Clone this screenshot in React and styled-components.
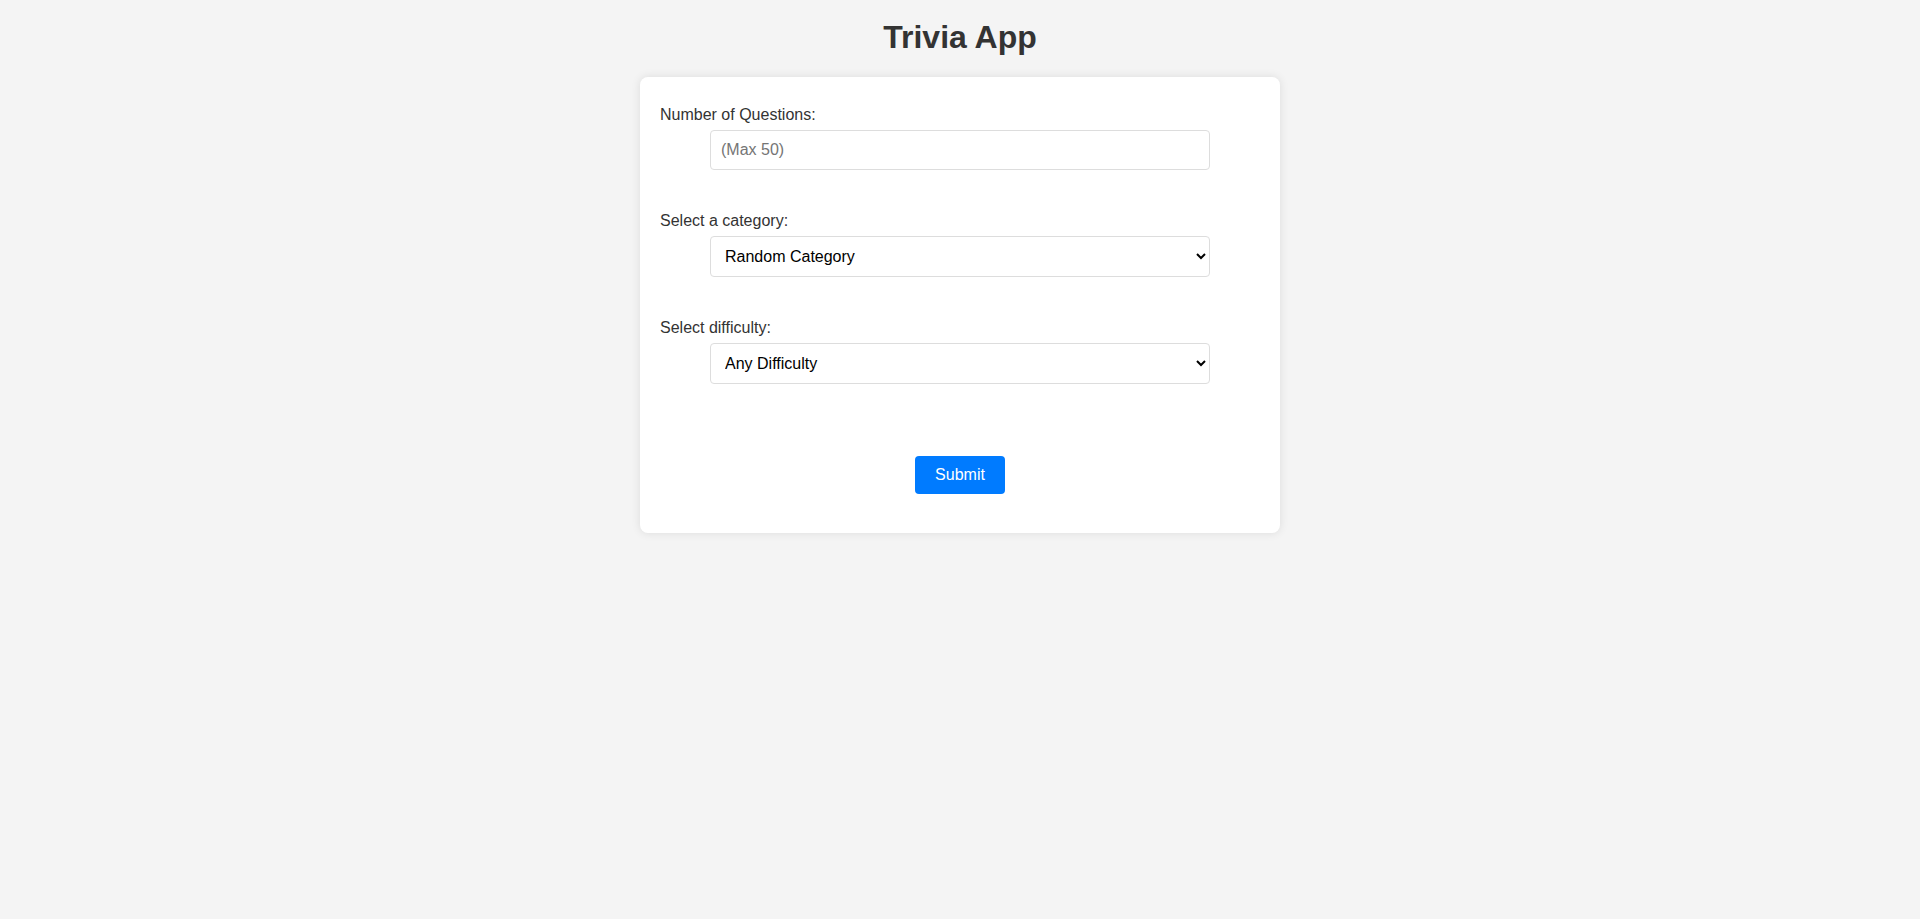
import React, { useState } from 'react';
import styled, { createGlobalStyle } from 'styled-components';

const GlobalStyle = createGlobalStyle`
  html, body {
    margin: 0;
    padding: 0;
    background: #f4f4f4;
  }

  body {
    font-family: Arial, "Liberation Sans", sans-serif;
    color: #333;
  }
`;

const Page = styled.div`
  min-height: 919px;
  padding: 19px 0 20px;
  box-sizing: border-box;
`;

const Title = styled.h1`
  margin: 0 0 21px;
  font-size: 32px;
  line-height: 37px;
  font-weight: bold;
  text-align: center;
  color: #333;
`;

const Card = styled.div`
  width: 600px;
  margin: 0 auto;
  padding: 20px;
  background: #fff;
  border-radius: 8px;
  box-shadow: 0 0 10px rgba(0, 0, 0, 0.1);
`;

const Field = styled.div`
  margin: 9px 0 ${p => (p.$last ? 0 : 42)}px;
`;

const Label = styled.label`
  display: block;
  margin-bottom: 6px;
  font-size: 16px;
  line-height: 18px;
  color: #333;
`;

const controlStyles = `
  display: block;
  width: 500px;
  margin: 0 auto;
  padding: 10px;
  box-sizing: border-box;
  border: 1px solid #ddd;
  border-radius: 4px;
  background: #fff;
  font-family: Arial, "Liberation Sans", sans-serif;
  font-size: 16px;
  line-height: 18px;
  color: #000;
`;

const TextInput = styled.input`
  ${controlStyles}
  height: 40px;

  &::placeholder {
    color: #757575;
  }
`;

const Select = styled.select`
  ${controlStyles}
  height: 41px;
  padding: 0 6px 0 10px;
`;

const Actions = styled.div`
  display: flex;
  justify-content: center;
  margin: 72px 0 19px;
`;

const SubmitButton = styled.button`
  padding: 10px 20px;
  border: none;
  border-radius: 4px;
  background: #007bff;
  color: #fff;
  font-family: Arial, "Liberation Sans", sans-serif;
  font-size: 16px;
  line-height: 18px;
  cursor: pointer;
`;

const CATEGORIES = ['Random Category', 'General Knowledge', 'Books', 'Film', 'Music', 'Science & Nature'];
const DIFFICULTIES = ['Any Difficulty', 'Easy', 'Medium', 'Hard'];

export default function App() {
  const [amount, setAmount] = useState('');
  const [category, setCategory] = useState(CATEGORIES[0]);
  const [difficulty, setDifficulty] = useState(DIFFICULTIES[0]);

  return (
    <Page>
      <GlobalStyle />
      <Title>Trivia App</Title>
      <Card>
        <form onSubmit={e => e.preventDefault()}>
          <Field>
            <Label htmlFor="amount">Number of Questions:</Label>
            <TextInput
              id="amount"
              type="number"
              placeholder="(Max 50)"
              value={amount}
              onChange={e => setAmount(e.target.value)}
            />
          </Field>
          <Field>
            <Label htmlFor="category">Select a category:</Label>
            <Select id="category" value={category} onChange={e => setCategory(e.target.value)}>
              {CATEGORIES.map(c => <option key={c} value={c}>{c}</option>)}
            </Select>
          </Field>
          <Field $last>
            <Label htmlFor="difficulty">Select difficulty:</Label>
            <Select id="difficulty" value={difficulty} onChange={e => setDifficulty(e.target.value)}>
              {DIFFICULTIES.map(d => <option key={d} value={d}>{d}</option>)}
            </Select>
          </Field>
          <Actions>
            <SubmitButton type="submit">Submit</SubmitButton>
          </Actions>
        </form>
      </Card>
    </Page>
  );
}
